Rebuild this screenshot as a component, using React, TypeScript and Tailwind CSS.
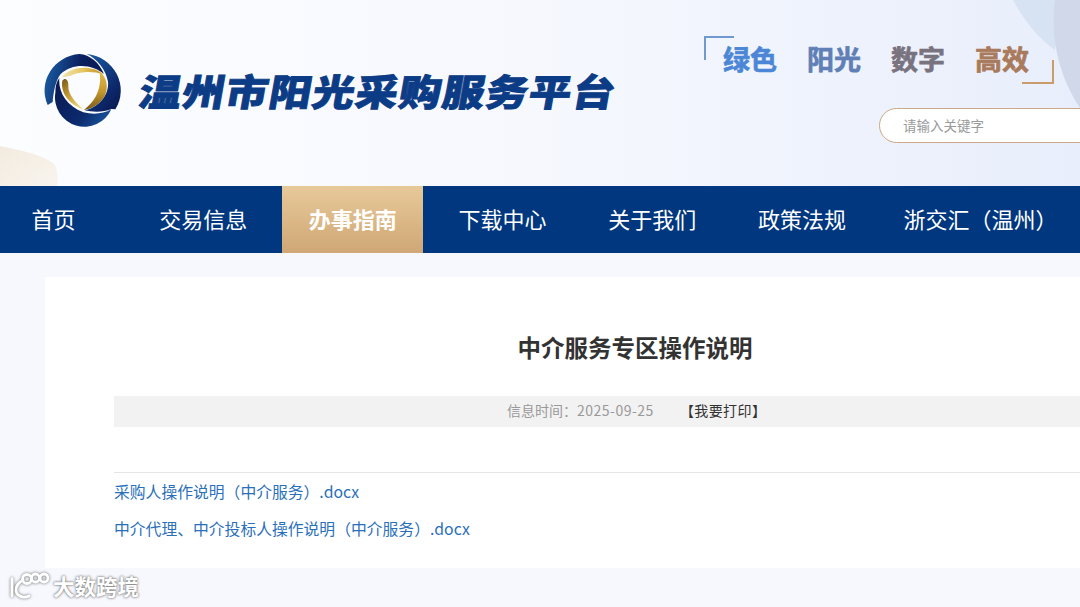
import React from "react";

const navItems = ["首页", "交易信息", "办事指南", "下载中心", "关于我们", "政策法规"];
const slogans = [
  { text: "绿色", color: "text-[#4b87d6] [-webkit-text-stroke:0.7px_#4b87d6]" },
  { text: "阳光", color: "text-[#5f7fb6] [-webkit-text-stroke:0.7px_#5f7fb6]" },
  { text: "数字", color: "text-[#78737f] [-webkit-text-stroke:0.7px_#78737f]" },
  { text: "高效", color: "text-[#a97a5b] [-webkit-text-stroke:0.7px_#a97a5b]" },
];

const Logo = () => (
  <svg viewBox="0 0 258 246" className="w-[86px] h-[82px] shrink-0">
    <defs>
      <linearGradient id="blueA" x1="0" y1="0.4" x2="1" y2="0.6">
        <stop offset="0" stopColor="#1a5ba3" />
        <stop offset="0.55" stopColor="#0b1f5e" />
        <stop offset="1" stopColor="#0a1a52" />
      </linearGradient>
      <linearGradient id="blueB" x1="0.1" y1="0" x2="0.8" y2="1">
        <stop offset="0" stopColor="#1a5ba3" />
        <stop offset="0.7" stopColor="#0c2a6e" />
        <stop offset="1" stopColor="#0a1a52" />
      </linearGradient>
      <linearGradient id="blueC" x1="0" y1="0.2" x2="1" y2="0.9">
        <stop offset="0" stopColor="#0a1a52" />
        <stop offset="0.6" stopColor="#0c2a6e" />
        <stop offset="1" stopColor="#1a5ba3" />
      </linearGradient>
      <linearGradient id="goldTop" x1="0" y1="0" x2="1" y2="0">
        <stop offset="0" stopColor="#f0e4b4" />
        <stop offset="0.5" stopColor="#e6c660" />
        <stop offset="1" stopColor="#c08f22" />
      </linearGradient>
      <linearGradient id="goldRight" x1="0" y1="0" x2="0" y2="1">
        <stop offset="0" stopColor="#e2bb4c" />
        <stop offset="0.55" stopColor="#c2952c" />
        <stop offset="1" stopColor="#76591a" />
      </linearGradient>
      <linearGradient id="goldLeft" x1="0" y1="0" x2="0.7" y2="1">
        <stop offset="0" stopColor="#75591c" />
        <stop offset="0.5" stopColor="#c39a30" />
        <stop offset="1" stopColor="#efd680" />
      </linearGradient>
    </defs>
    <path fill="url(#blueA)" d="M38 156L23 165A114 110 0 0 1 118 12C150 14 178 38 192 72C160 44 100 36 62 72C46 92 40 130 38 156Z" />
    <path fill="url(#blueB)" d="M140 12A114 110 0 0 1 226 178L214 177C190 188 155 186 134 181C176 172 208 135 204 95C198 60 172 26 140 12Z" />
    <path fill="url(#blueC)" d="M46 128C46 108 50 94 58 84C54 124 78 168 130 187C160 194 190 192 214 178A88.4 88.4 0 0 1 46 128Z" />
    <path fill="url(#goldTop)" d="M66 80C96 48 156 44 190 73C162 64 124 64 98 74C88 79 76 82 66 80Z" />
    <path fill="url(#goldRight)" d="M178 64C200 80 208 114 192 142C176 166 152 178 132 180C146 168 160 154 168 138C178 118 184 92 178 64Z" />
    <path fill="url(#goldLeft)" d="M67 92C74 82 86 88 85 108C84 134 108 160 130 177C94 168 60 132 67 92Z" />
  </svg>
);

const Watermark = () => (
  <div className="absolute left-[8px] top-[570px] flex items-center gap-[3px] text-white text-[21.5px] leading-none font-bold [text-shadow:0_0_2px_#777777,0_0_3px_#8a8a8a]">
    <svg viewBox="0 0 42 32" className="w-[42px] h-[32px] drop-shadow-[0_0_1.5px_#666666]" fill="none" stroke="#ffffff" strokeWidth="2.8" strokeLinecap="round">
      <path d="M4 9V26" />
      <path d="M15 10C10 13 8 17 8 20C8 25 14 29 21 26" />
      <circle cx="19" cy="9" r="4.5" />
      <circle cx="27.5" cy="8" r="4" />
      <circle cx="36" cy="8" r="4" />
    </svg>
    <span>大数跨境</span>
  </div>
);

export default function App() {
  return (
    <div className="relative w-[1080px] h-[607px] overflow-hidden bg-[#f7f8fe] font-['Noto_Sans_CJK_SC','Liberation_Sans',sans-serif]">
      <header className="relative h-[186px] overflow-hidden bg-gradient-to-r from-[#fcfdff] via-[#f6f8fe] to-[#e8eefb] flex">
        <svg viewBox="0 0 1080 186" className="absolute left-0 top-0 w-[1080px] h-[186px]">
          <defs>
            <linearGradient id="cream" x1="0" y1="0" x2="1" y2="1">
              <stop offset="0" stopColor="#f3ebdf" />
              <stop offset="1" stopColor="#f8f4ee" />
            </linearGradient>
          </defs>
          <path fill="url(#cream)" d="M0 146C20 150 45 155 55 165C58 172 58 180 57 186L0 186Z" />
          <path fill="#d7e2f2" d="M1013 0C1025 22 1038 38 1055 50L1060 0Z" />
          <path fill="#d0d8e9" d="M1055 0C1050 35 1058 75 1080 108L1080 0Z" />
        </svg>
        <div className="relative flex items-start pl-[40px] pt-[50px] w-[704px] shrink-0">
          <Logo />
          <h1 className="ml-[14px] mt-[14px] text-[37px] leading-[52px] font-black tracking-[1px] text-[#0c3c85] whitespace-nowrap origin-left [transform:skewX(-10deg)_scaleX(1.14)] [-webkit-text-stroke:0.9px_#0c3c85]">
            温州市阳光采购服务平台
          </h1>
        </div>
        <div className="relative flex flex-col shrink-0 w-[376px]">
          <div className="relative mt-[36px] h-[72px] pl-[19px] pt-[5px] flex gap-[30px]">
            <span className="absolute left-0 top-0 w-[30px] h-[24px] border-l-2 border-t-2 border-[#6f9ad0]" />
            <span className="absolute left-[318px] top-[24px] w-[32px] h-[24px] border-r-2 border-b-2 border-[#c99c6c]" />
            {slogans.map((s) => (
              <span key={s.text} className={`text-[27px] leading-[36px] font-bold ${s.color}`}>
                {s.text}
              </span>
            ))}
          </div>
          <input
            readOnly
            placeholder="请输入关键字"
            className="ml-[175px] w-[300px] h-[35px] shrink-0 rounded-full border border-[#c9a988] bg-white pl-[23px] pb-[2px] text-[13.5px] outline-none placeholder:text-[#9a9a9a]"
          />
        </div>
      </header>

      <nav className="h-[67px] bg-[#00377f] flex items-stretch text-white text-[22px] whitespace-nowrap">
        <div className="flex gap-[8.7px] ml-[-17px]">
          {navItems.map((item, i) => (
            <a
              key={item}
              className={
                i === 2
                  ? "w-[141px] pb-[2px] flex items-center justify-center font-bold bg-gradient-to-b from-[#e7c999] to-[#d0a776]"
                  : "w-[141px] pb-[2px] flex items-center justify-center"
              }
            >
              {item}
            </a>
          ))}
        </div>
        <a className="ml-[31px] pb-[2px] flex items-center">浙交汇（温州）</a>
      </nav>

      <main className="pt-[24px] pl-[45px]">
        <article className="w-[1180px] h-[291px] bg-white px-[69px] pt-[49px]">
          <h2 className="text-center text-[23.5px] leading-[42px] font-bold text-[#333333]">中介服务专区操作说明</h2>
          <div className="mt-[28px] h-[31px] pb-[2px] bg-[#f2f2f2] flex items-center gap-[26px] pl-[393px]">
            <span className="text-[14px] text-[#999999]">
              信息时间：<span className="tracking-[0.5px]">2025-09-25</span>
            </span>
            <span className="text-[14px] tracking-[0.4px] text-[#333333]">【我要打印】</span>
          </div>
          <div className="mt-[45px] border-t border-[#e5e5e5] pt-[7px] flex flex-col gap-[13px] text-[15.8px] leading-[24px] text-[#2a6fba]">
            <a>采购人操作说明（中介服务）.docx</a>
            <a>中介代理、中介投标人操作说明（中介服务）.docx</a>
          </div>
        </article>
      </main>

      <Watermark />
    </div>
  );
}
